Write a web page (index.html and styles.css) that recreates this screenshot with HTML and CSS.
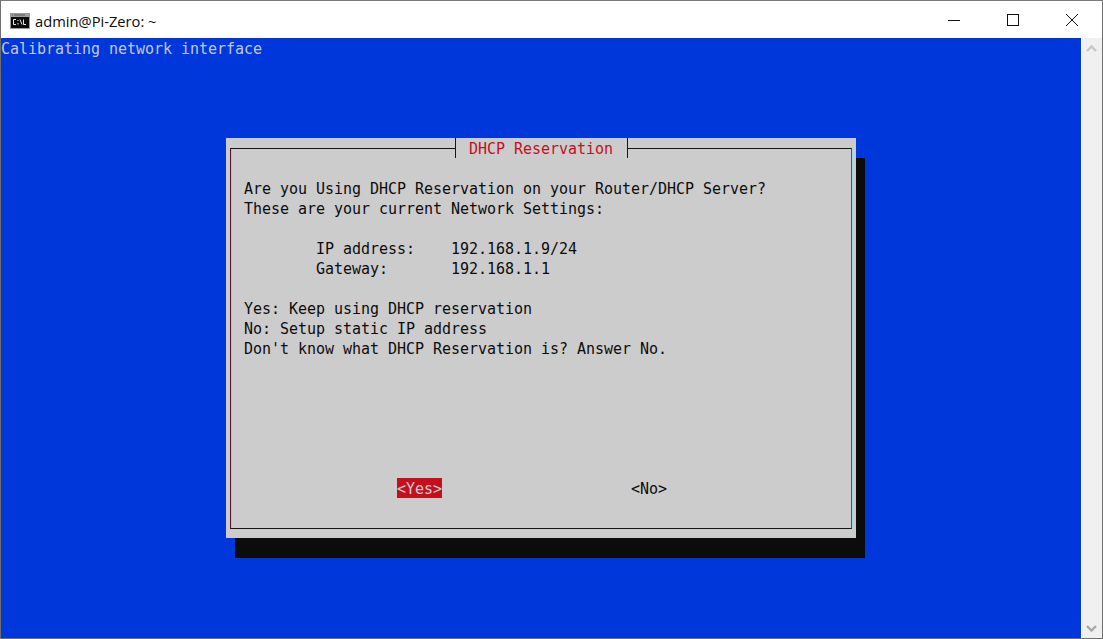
FILE: index.html
```html
<!DOCTYPE html>
<html lang="en">
<head>
<meta charset="utf-8">
<title>admin@Pi-Zero: ~</title>
<link rel="stylesheet" href="styles.css">
</head>
<body>
<div class="window">
  <header class="titlebar">
    <svg class="app-icon" width="20" height="16" viewBox="0 0 20 16">
      <rect x="0" y="0" width="20" height="16" fill="#9c9c9c"/>
      <rect x="1" y="4" width="18" height="11" fill="#0c0c0c"/>
      <path d="M2 2h1M4 2h11" stroke="#5a5a5a" stroke-width="1"/>
      <path d="M6 6.5H3.5v5H6M8 7v1M8 10v1.5M10 6.5l2 5M13.5 6.5v5h2.5" stroke="#e8e8e8" stroke-width="1" fill="none"/>
    </svg>
    <span class="title">admin@Pi-Zero: ~</span>
    <div class="controls">
      <svg class="ctl" width="59" height="37" viewBox="0 0 59 37"><path d="M24 19.5h12" stroke="#111" stroke-width="1"/></svg>
      <svg class="ctl" width="59" height="37" viewBox="0 0 59 37"><rect x="24.5" y="13.5" width="11" height="11" fill="none" stroke="#111" stroke-width="1"/></svg>
      <svg class="ctl" width="59" height="37" viewBox="0 0 59 37"><path d="M24 13l12 12M36 13l-12 12" stroke="#111" stroke-width="1"/></svg>
    </div>
  </header>
  <div class="body">
    <main class="terminal">
      <div class="status">Calibrating network interface</div>
      <section class="dialog">
        <div class="frame">
          <h1 class="dialog-title">DHCP Reservation</h1>
          <div class="message">Are you Using DHCP Reservation on your Router/DHCP Server?
These are your current Network Settings:

        IP address:    192.168.1.9/24
        Gateway:       192.168.1.1

Yes: Keep using DHCP reservation
No: Setup static IP address
Don't know what DHCP Reservation is? Answer No.</div>
          <div class="buttons">
            <span class="btn btn-active">&lt;Yes&gt;</span>
            <span class="btn">&lt;No&gt;</span>
          </div>
        </div>
      </section>
    </main>
    <aside class="scrollbar">
      <svg width="20" height="17" viewBox="0 0 20 17"><path d="M5 13l4.5-4.5L14 13" fill="none" stroke="#c8c8c8" stroke-width="2.4"/></svg>
      <svg width="20" height="17" viewBox="0 0 20 17"><path d="M5 5l4.5 4.5L14 5" fill="none" stroke="#a8a8a8" stroke-width="2.4"/></svg>
    </aside>
  </div>
</div>
</body>
</html>
```
FILE: styles.css
```css
* { box-sizing: border-box; }
html, body { margin: 0; padding: 0; height: 100%; background: #fff; overflow: hidden; }
.window {
  width: 1103px;
  height: 639px;
  border: 1px solid #6e6e6e;
  border-top-color: #7a7a7a;
  display: flex;
  flex-direction: column;
  background: #fff;
}
.titlebar {
  height: 37px;
  flex: none;
  display: flex;
  align-items: center;
  padding-left: 9px;
  background: #fff;
}
.app-icon { flex: none; margin-top: 3px; }
.title {
  margin-left: 5px;
  padding-top: 2px;
  font: 14.7px/20px "Open Sans", "Liberation Sans", sans-serif;
  color: #0c0c0c;
}
.controls { margin-left: auto; display: flex; margin-right: 1px; }
.ctl { display: block; }
.body { flex: 1; display: flex; min-height: 0; }
.terminal {
  width: 1080px;
  flex: none;
  background: #0037da;
  font: 15px/20px "DejaVu Sans Mono", "Liberation Mono", monospace;
  overflow: hidden;
}
.status { color: #c2c8dc; height: 20px; padding-top: 1px; letter-spacing: -0.03px; }
.dialog {
  width: 630px;
  height: 400px;
  margin: 80px 0 0 225px;
  padding: 10px 4px 9px 4px;
  background: #cccccc;
  box-shadow: 9px 20px 0 #0c0c0c;
}
.frame {
  position: relative;
  height: 381px;
  width: 622px;
  border: 1px solid #161616;
  border-left-color: #5b1030;
  border-right-color: #5e5a20;
  box-shadow: 1px 0 0 #a6d6e2, inset 1px 0 0 #a9c6d8;
}
.dialog-title {
  position: absolute;
  top: -11px;
  left: 224px;
  margin: 0;
  width: 173px;
  height: 20px;
  padding: 1px 13px 0;
  font: inherit;
  letter-spacing: -0.03px;
  color: #c50f1f;
  background: #cccccc;
  border-left: 1px solid #161616;
  border-right: 1px solid #161616;
  white-space: pre;
}
.message {
  padding: 30px 0 0 13px;
  height: 329px;
  color: #0c0c0c;
  white-space: pre;
  letter-spacing: -0.03px;
}
.buttons {
  display: flex;
  padding-left: 166px;
  color: #0c0c0c;
  letter-spacing: -0.03px;
}
.btn { display: block; height: 20px; padding-top: 1px; }
.btn-active { background: #c50f1f; color: #cccccc; width: 45px; margin-right: 189px; }
.scrollbar {
  flex: 1;
  background: #f0f0f0;
  border-left: 1px solid #fff;
  display: flex;
  flex-direction: column;
  justify-content: space-between;
}
.scrollbar svg { display: block; margin: 0; }
```
